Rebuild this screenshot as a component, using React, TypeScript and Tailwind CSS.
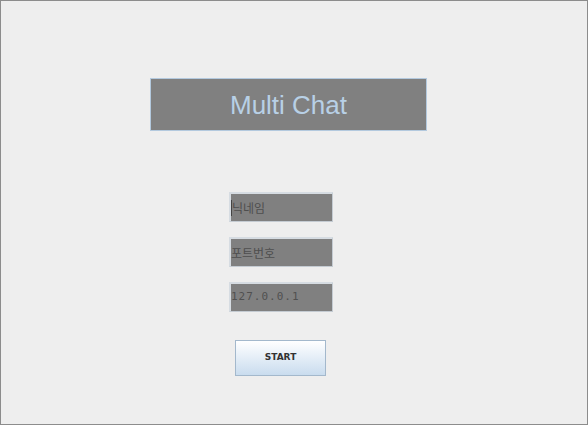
export default function App() {
  const fields = [
    { text: "닉네임", caret: true, mono: false },
    { text: "포트번호", caret: false, mono: false },
    { text: "127.0.0.1", caret: false, mono: true },
  ];

  return (
    <div className="w-[588px] h-[425px] border border-[#8c8c8c] bg-[#eeeeee] flex flex-col items-start">
      <div className="ml-[149px] mt-[77px] w-[277px] h-[53px] border border-[#b3c9de] bg-[#808080] flex items-center justify-center">
        <span
          className="text-[26px] text-[#b8d0e6] leading-none"
          style={{ fontFamily: '"Liberation Sans", Arial, sans-serif' }}
        >
          Multi Chat
        </span>
      </div>

      <div className="ml-[228px] mt-[61px] flex flex-col gap-[15px]">
        {fields.map((f) => (
          <div
            key={f.text}
            className="w-[104px] h-[30px] border border-[#c4cbd2] border-l-[2px] border-t-[2px] border-l-[#d6dce2] border-t-[#d6dce2] bg-[#808080] flex items-center"
          >
            {f.caret && <span className="w-px h-[16px] bg-[#444444]" />}
            <span
              className={
                f.mono
                  ? "text-[11px] text-[#505050] tracking-[1px]"
                  : "text-[12px] text-[#4e4e4e]"
              }
              style={{
                fontFamily: f.mono
                  ? '"DejaVu Sans Mono", "Liberation Mono", monospace'
                  : '"Noto Sans CJK KR", "Noto Sans", sans-serif',
              }}
            >
              {f.text}
            </span>
          </div>
        ))}
      </div>

      <div className="ml-[234px] mt-[28px] w-[91px] h-[36px] border border-[#a3b8cc] bg-gradient-to-b from-[#ffffff] to-[#c9dcee] flex items-center justify-center">
        <span
          className="text-[9px] font-bold text-[#333333]"
          style={{ fontFamily: '"DejaVu Sans", "Liberation Sans", sans-serif' }}
        >
          START
        </span>
      </div>
    </div>
  );
}
